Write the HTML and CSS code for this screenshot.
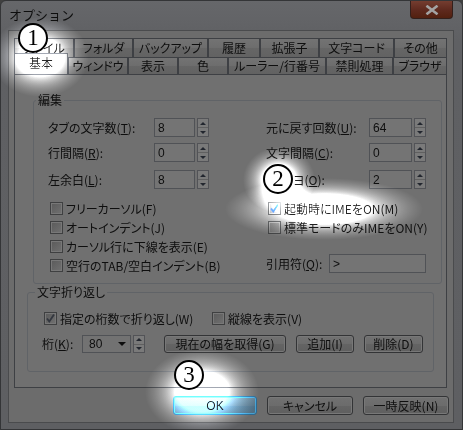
FILE: index.html
```html
<!DOCTYPE html>
<html lang="ja">
<head>
<meta charset="utf-8">
<title>オプション</title>
<link rel="stylesheet" href="styles.css">
</head>
<body>
<div class="window">
  <div class="titlebar">
    <span class="title">オプション</span>
    <div class="close"><svg width="14" height="10" viewBox="0 0 14 10"><path d="M2.5 1.5 L11.5 8.5 M11.5 1.5 L2.5 8.5" stroke="#a3a3a3" stroke-width="2.6" stroke-linecap="square"/></svg></div>
  </div>
  <div class="client">
    <div class="tabs">
      <div class="tabrow back">
        <div class="tab w-file">ファイル</div>
        <div class="tab w-folder">フォルダ</div>
        <div class="tab w-backup">バックアップ</div>
        <div class="tab w-hist">履歴</div>
        <div class="tab w-ext">拡張子</div>
        <div class="tab w-code">文字コード</div>
        <div class="tab w-other">その他</div>
      </div>
      <div class="tabrow front">
        <div class="tab selected w-basic">基本</div>
        <div class="tab w-window">ウィンドウ</div>
        <div class="tab w-view">表示</div>
        <div class="tab w-color">色</div>
        <div class="tab w-ruler">ルーラー/行番号</div>
        <div class="tab w-kinsoku">禁則処理</div>
        <div class="tab w-browser">ブラウザ</div>
      </div>
    </div>
    <div class="page">
      <fieldset class="group edit">
        <legend>編集</legend>
        <div class="cols">
          <div class="col col-l">
            <div class="field r1"><span class="lbl lbl-l">タブの文字数(<u>T</u>):</span><span class="input in-l">8</span><span class="spin"><i class="up"></i><i class="down"></i></span></div>
            <div class="field r2"><span class="lbl lbl-l">行間隔(<u>R</u>):</span><span class="input in-l">0</span><span class="spin"><i class="up"></i><i class="down"></i></span></div>
            <div class="field r3"><span class="lbl lbl-l">左余白(<u>L</u>):</span><span class="input in-l">8</span><span class="spin"><i class="up"></i><i class="down"></i></span></div>
            <div class="checks">
              <div class="check"><span class="box"></span>フリーカーソル(F)</div>
              <div class="check"><span class="box"></span>オートインデント(J)</div>
              <div class="check"><span class="box"></span>カーソル行に下線を表示(E)</div>
              <div class="check"><span class="box"></span>空行のTAB/空白インデント(B)</div>
            </div>
          </div>
          <div class="col col-r">
            <div class="field r1"><span class="lbl lbl-r">元に戻す回数(<u>U</u>):</span><span class="input in-r">64</span><span class="spin"><i class="up"></i><i class="down"></i></span></div>
            <div class="field r2"><span class="lbl lbl-r">文字間隔(<u>C</u>):</span><span class="input in-r">0</span><span class="spin"><i class="up"></i><i class="down"></i></span></div>
            <div class="field r3"><span class="lbl lbl-r lbl-o">ヨ(<u>O</u>):</span><span class="input in-r">2</span><span class="spin"><i class="up"></i><i class="down"></i></span></div>
            <div class="checks">
              <div class="check"><span class="box checked"><svg width="11" height="11" viewBox="0 0 11 11"><path d="M2 5.5 L4.3 8.5 L9 1.5" fill="none" stroke="#2f4c86" stroke-width="1.8"/></svg></span>起動時にIMEをON(M)</div>
              <div class="check"><span class="box"></span>標準モードのみIMEをON(Y)</div>
            </div>
            <div class="field quote"><span class="lbl lbl-q">引用符(<u>Q</u>):</span><span class="input in-q">&gt;</span></div>
          </div>
        </div>
      </fieldset>
      <fieldset class="group wrap">
        <legend>文字折り返し</legend>
        <div class="wrow1">
          <div class="check wcheck"><span class="box checked"><svg width="11" height="11" viewBox="0 0 11 11"><path d="M2 5.5 L4.3 8.5 L9 1.5" fill="none" stroke="#33373f" stroke-width="1.8"/></svg></span>指定の桁数で折り返し(W)</div>
          <div class="check"><span class="box"></span>縦線を表示(V)</div>
        </div>
        <div class="wrow2">
          <span class="lbl lbl-k">桁(<u>K</u>):</span>
          <span class="combo">80<i class="drop"></i></span>
          <span class="spin spin-s"><i class="up"></i><i class="down"></i></span>
          <span class="btn b-width">現在の幅を取得(G)</span>
          <span class="btn b-add">追加(I)</span>
          <span class="btn b-del">削除(D)</span>
        </div>
      </fieldset>
    </div>
    <div class="buttons">
      <span class="btn b-ok">OK</span>
      <span class="btn b-cancel">キャンセル</span>
      <span class="btn b-apply">一時反映(N)</span>
    </div>
  </div>

  <div class="glow g1"></div>
  <div class="glow g2a"></div>
  <div class="glow g2b"></div>
  <div class="glow g3"></div>
  <div class="anno a1">1</div>
  <div class="anno a2">2</div>
  <div class="anno a3">3</div>
</div>
</body>
</html>
```
FILE: styles.css
```css
* { box-sizing: border-box; }
html, body { margin: 0; padding: 0; }
body {
  width: 463px; height: 430px; overflow: hidden;
  background: #404040;
  font-family: "Noto Sans CJK JP", "Noto Sans", sans-serif;
  font-size: 12px; line-height: 14px; color: #0e0e0e;
  font-feature-settings: "palt";
}
.window {
  position: relative;
  width: 463px; height: 430px;
  background: linear-gradient(#66676a, #5f6063 40px, #5e5f62);
  border: 1px solid #343537;
  border-radius: 6px 6px 0 0;
}
.titlebar { height: 29px; display: flex; justify-content: space-between; align-items: flex-start; }
.title { margin: 6px 0 0 8px; font-size: 13px; line-height: 16px; font-feature-settings: normal; }
.close {
  width: 43px; height: 18px; margin-right: 9px;
  background: linear-gradient(#743d30, #5f2a1f 50%, #52200f);
  border: 1px solid #33201c; border-top: none;
  border-radius: 0 0 4px 4px;
  display: flex; align-items: center; justify-content: center;
}
.client {
  margin-left: 7px; width: 446px; height: 393px;
  background: #6c6c6c;
  border: 1px solid #4a4b4d;
  padding: 7px 4px 0 5px;
}
.tabs { height: 36px; }
.tabrow { display: flex; }
.tabrow.back { height: 19px; }
.tabrow.front { height: 17px; }
.tab {
  height: 100%;
  border: 1px solid #3e4044; border-bottom: none;
  background: linear-gradient(#737373, #6d6d6d 50%, #666 50%, #626262);
  display: flex; align-items: center; justify-content: center;
  white-space: nowrap;
}
.tab.selected {
  position: relative; z-index: 2;
  height: 21px; margin-top: -4px; margin-bottom: -1px;
  background: #757575;
  padding-bottom: 3px;
}
.w-file { width: 60px; } .w-folder { width: 59px; } .w-backup { width: 75px; }
.w-hist { width: 52px; } .w-ext { width: 59px; } .w-code { width: 75px; } .w-other { width: 53px; }
.w-basic { width: 54px; } .w-window { width: 60px; } .w-view { width: 50px; } .w-color { width: 50px; }
.w-ruler { width: 98px; } .w-kinsoku { width: 67px; } .w-browser { width: 54px; }

.page {
  position: relative; z-index: 1;
  width: 433px; height: 314px;
  background: #707070;
  border: 1px solid #3e4044;
}
.group {
  margin: 0; min-width: 0;
  border: 1px solid #606367; border-radius: 3px;
  padding: 0 0 0 14px;
}
.group legend { padding: 0 2px; line-height: 14px; font-size: 12px; }
.edit { margin: 18px 0 0 18px; width: 409px; height: 191px; padding-top: 11px; }
.edit legend { margin-left: -12px; }
.wrap { margin: 1px 0 0 12px; width: 407px; height: 87px; padding-top: 10px; }
.wrap legend { margin-left: -7px; }

.cols { display: flex; }
.col-l { width: 218px; }
.field { display: flex; align-items: center; height: 19px; }
.r2 { margin-top: 6px; }
.r3 { margin-top: 8px; }
.lbl { white-space: nowrap; }
.lbl-l { width: 106px; }
.lbl-r { width: 103px; }
.lbl-o { padding-left: 27px; }
.lbl-q { width: 63px; }
.input {
  height: 19px; border: 1px solid #505256;
  background: #747474; padding-left: 3px;
  display: flex; align-items: center;
  font-family: "Liberation Sans", sans-serif;
}
.in-l { width: 41px; }
.in-r { width: 43px; }
.in-q { width: 97px; }
.spin {
  width: 12px; height: 19px; margin-left: 2px;
  border: 1px solid #525357;
  background: #7a7a7a;
  display: flex; flex-direction: column;
}
.spin i { flex: 1; display: flex; align-items: center; justify-content: center; }
.spin i + i { border-top: 1px solid #606060; }
.spin .up::after { content: ""; border-left: 3px solid transparent; border-right: 3px solid transparent; border-bottom: 3px solid #22262e; }
.spin .down::after { content: ""; border-left: 3px solid transparent; border-right: 3px solid transparent; border-top: 3px solid #22262e; }
.spin-s { height: 18px; }

.checks { margin-top: 10px; }
.check { display: flex; align-items: center; height: 19px; white-space: nowrap; }
.box {
  width: 13px; height: 13px; margin: 0 3px 0 2px;
  border: 1px solid #3f4041;
  background: linear-gradient(135deg, #5a5a5a, #717171);
  box-shadow: inset 0 0 0 1px #787878;
  display: flex; align-items: center; justify-content: center;
}
.quote { margin-top: 17px; }

.wrow1 { display: flex; height: 19px; }
.wcheck { width: 168px; }
.wrow2 { display: flex; align-items: center; height: 18px; margin-top: 7px; }
.lbl-k { width: 40px; }
.combo {
  width: 49px; height: 18px; border: 1px solid #505256; background: #727272;
  padding-left: 6px; display: flex; align-items: center; justify-content: space-between;
  font-family: "Liberation Sans", sans-serif;
}
.combo .drop { margin-right: 4px; border-left: 4px solid transparent; border-right: 4px solid transparent; border-top: 4px solid #0e0e0e; }

.btn {
  height: 18px;
  border: 1px solid #333436; border-radius: 3px;
  background: linear-gradient(#717171, #6c6c6c 50%, #646464 50%, #5f5f5f);
  box-shadow: inset 0 0 0 1px #787878;
  display: flex; align-items: center; justify-content: center;
  white-space: nowrap;
}
.b-width { width: 122px; margin-left: 19px; }
.b-add { width: 58px; margin-left: 10px; }
.b-del { width: 59px; margin-left: 10px; }

.buttons { display: flex; justify-content: flex-end; gap: 10px; margin-top: 8px; }
.buttons .btn { height: 19px; }
.b-ok { width: 84px; border-color: #2b6890; background: linear-gradient(#607a8a, #577284 50%, #4e6d82 50%, #4f6f84); box-shadow: inset 0 0 0 1px #47a0d0; font-family: "Liberation Sans", sans-serif; }
.b-cancel { width: 86px; }
.b-apply { width: 86px; }

.glow {
  position: absolute; z-index: 5; pointer-events: none;
  mix-blend-mode: color-dodge;
  background: radial-gradient(closest-side, #a0a0a0 0%, #9c9c9c 45%, #000 100%);
}
.g1 { left: -10px; top: 16px; width: 98px; height: 80px; }
.g2a { left: 242px; top: 146px; width: 72px; height: 66px; }
.g2b { left: 224px; top: 177px; width: 198px; height: 62px; }
.g3 { left: 144px; top: 348px; width: 114px; height: 86px; }

.anno {
  position: absolute; z-index: 6;
  width: 30px; height: 30px;
  border: 2px solid #000; border-radius: 50%;
  background: #fff;
  font-family: "Liberation Serif", serif; font-size: 23px; line-height: 26px;
  text-align: center; color: #000;
  font-feature-settings: normal;
}
.a1 { left: 17px; top: 22px; }
.a2 { left: 262px; top: 163px; }
.a3 { left: 173px; top: 359px; }
```
